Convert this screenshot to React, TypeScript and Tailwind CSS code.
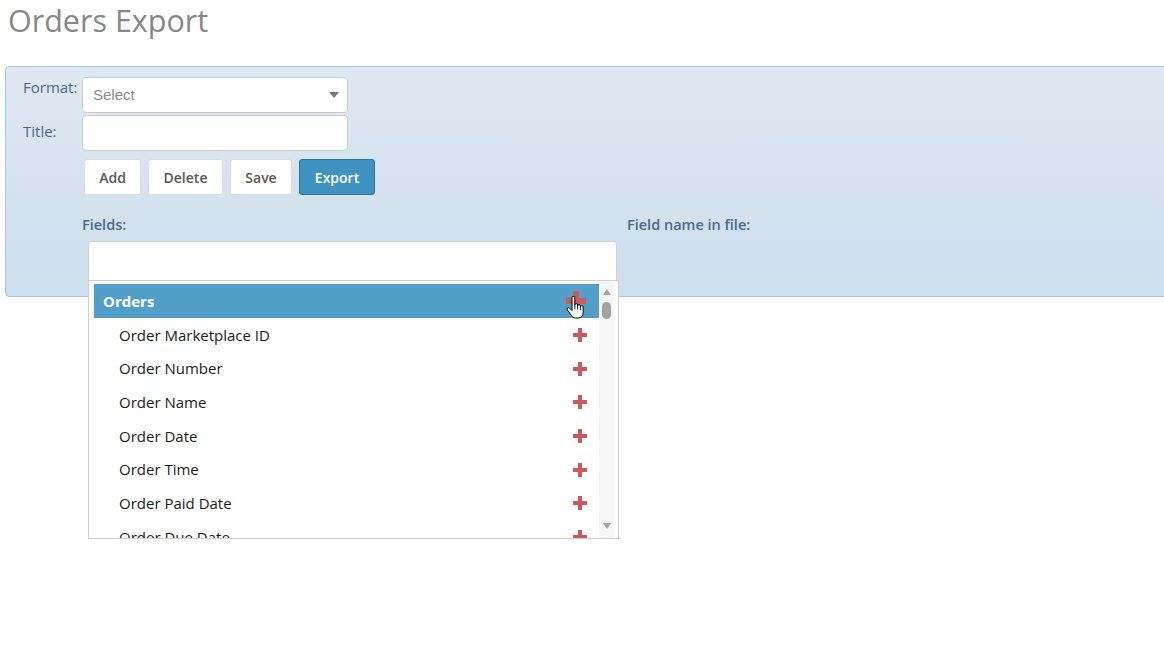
import { useState } from "react";

const fields = [
    "Order Marketplace ID",
    "Order Number",
    "Order Name",
    "Order Date",
    "Order Time",
    "Order Paid Date",
    "Order Due Date",
];

function PlusIcon({ size = 14 }: { size?: number }) {
    return (
        <svg width={size} height={size} viewBox="0 0 14 14">
            <rect x="5" y="0" width="4" height="14" fill="#cf5858" />
            <rect x="0" y="5" width="14" height="4" fill="#cf5858" />
        </svg>
    );
}

// mouse pointer hovering the group's add button
function HandCursor() {
    return (
        <svg width="20" height="24" viewBox="0 0 20 24" className="absolute z-20 left-[566px] top-[296px] pointer-events-none">
            <path
                d="M6 1.6a1.4 1.4 0 0 1 2.8 0V9a1.4 1.4 0 0 1 2.8 0v1a1.4 1.4 0 0 1 2.8 0v1a1.4 1.4 0 0 1 2.8 0v5.5c0 3.2-2 5.5-5 5.5H9.6c-2 0-3.1-1-4.1-2.6L1.4 14a1.4 1.4 0 0 1 2.2-1.8L6 14.6Z"
                fill="#fff"
                stroke="#000"
                strokeWidth="1"
                strokeLinejoin="round"
            />
            <path d="M8.8 9v4.5M11.6 10v3.5M14.4 11v3" stroke="#000" strokeWidth="0.9" />
        </svg>
    );
}

function FieldList() {
    return (
        <div className="absolute left-[-1px] top-[38px] w-[531px] h-[259px] bg-white border border-[#cfcfcf] flex z-10">
            <div className="pl-[5px] pt-[3px] w-[510px] overflow-hidden">
                <div className="h-[34px] bg-[#519fc8] flex items-center justify-between pl-[9px] pr-[13px]">
                    <span className="text-[15px] font-bold text-white">Orders</span>
                    <PlusIcon size={20} />
                </div>
                {fields.map((f) => (
                    <div key={f} className="h-[33.7px] flex items-center justify-between pl-[25px] pr-[12px]">
                        <span className="text-[15px] text-[#1b1b1b]">{f}</span>
                        <PlusIcon />
                    </div>
                ))}
            </div>
            <div className="w-[15px] bg-[#f6f6f6] flex flex-col items-center pt-[8px] pb-[9px]">
                <div className="w-0 h-0 border-l-[4.5px] border-r-[4.5px] border-b-[6px] border-l-transparent border-r-transparent border-b-[#a3a3a3]" />
                <div className="w-[9px] h-[17px] mt-[7px] rounded-full bg-[#a3a3a3]" />
                <div className="flex-1" />
                <div className="w-0 h-0 border-l-[4.5px] border-r-[4.5px] border-t-[6px] border-l-transparent border-r-transparent border-t-[#a3a3a3]" />
            </div>
        </div>
    );
}

export default function App() {
    const [title, setTitle] = useState("");

    return (
        <div className="w-full min-h-screen overflow-hidden bg-white font-['Open_Sans',sans-serif]">
            <h1 className="pl-[8px] text-[30.5px] leading-[41px] text-[#878787]">Orders Export</h1>

            <div className="relative mt-[25px] ml-[5px] w-[1180px] rounded-[4px] border border-[#a9c5e1] bg-linear-to-b from-[#dfe8f1] to-[#cddeec] pl-[17px] pt-[10px] pb-[16px]">
                <div className="flex items-start">
                    <label className="w-[59px] text-[15px] leading-[20px] text-[#4b6b8c]">Format:</label>
                    <div className="w-[266px] h-[36px] bg-white border border-[#cccccc] rounded-[4px] flex items-center justify-between pl-[10px] pr-[8px]">
                        <span className="font-['Liberation_Sans',Arial,sans-serif] text-[15px] text-[#8a8a8a]">Select</span>
                        <span className="w-0 h-0 border-l-[5.5px] border-r-[5.5px] border-t-[6px] border-l-transparent border-r-transparent border-t-[#777]" />
                    </div>
                </div>

                <div className="flex items-start mt-[2px]">
                    <label className="w-[59px] pt-[6px] text-[15px] leading-[20px] text-[#4b6b8c]">Title:</label>
                    <input
                        value={title}
                        onChange={(e) => setTitle(e.target.value)}
                        className="w-[266px] h-[36px] bg-white border border-[#cccccc] rounded-[4px] px-[10px] outline-none"
                    />
                </div>

                <div className="flex gap-[7px] mt-[8px] ml-[61px]">
                    <button className="w-[57px] h-[36px] bg-white border border-[#dcdcdc] rounded-[3px] text-[14px] font-semibold text-[#5b5752]">Add</button>
                    <button className="w-[75px] h-[36px] bg-white border border-[#dcdcdc] rounded-[3px] text-[14px] font-semibold text-[#5b5752]">Delete</button>
                    <button className="w-[62px] h-[36px] bg-white border border-[#dcdcdc] rounded-[3px] text-[14px] font-semibold text-[#5b5752]">Save</button>
                    <button className="w-[76px] h-[36px] bg-[#3f93c0] border border-[#2b76a1] rounded-[3px] text-[14px] font-semibold text-white">Export</button>
                </div>

                <div className="flex mt-[20px] ml-[59px]">
                    <div className="w-[545px]">
                        <div className="text-[14.5px] leading-[20px] font-semibold text-[#4b6b8c]">Fields:</div>
                        <div className="relative mt-[6px] ml-[6px] w-[529px] h-[39px] bg-white border border-[#d2d2d2] border-b-0 rounded-t-[4px]">
                            <FieldList />
                        </div>
                    </div>
                    <div className="text-[14.5px] leading-[20px] font-semibold text-[#4b6b8c]">Field name in file:</div>
                </div>
            </div>

            <HandCursor />
        </div>
    );
}
